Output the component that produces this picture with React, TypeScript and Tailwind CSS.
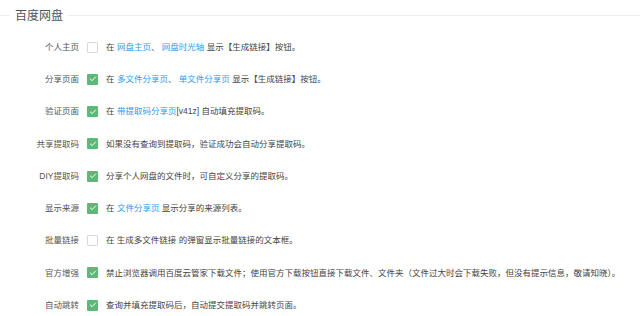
import { Check } from "lucide-react";

type Part = string | { link: string };

const rows: { label: string; checked: boolean; parts: Part[] }[] = [
    { label: "个人主页", checked: false, parts: ["在 ", { link: "网盘主页" }, "、 ", { link: "网盘时光轴" }, " 显示【生成链接】按钮。"] },
    { label: "分享页面", checked: true, parts: ["在 ", { link: "多文件分享页" }, "、 ", { link: "单文件分享页" }, " 显示【生成链接】按钮。"] },
    { label: "验证页面", checked: true, parts: ["在 ", { link: "带提取码分享页" }, "[v41z] 自动填充提取码。"] },
    { label: "共享提取码", checked: true, parts: ["如果没有查询到提取码，验证成功会自动分享提取码。"] },
    { label: "DIY提取码", checked: true, parts: ["分享个人网盘的文件时，可自定义分享的提取码。"] },
    { label: "显示来源", checked: true, parts: ["在 ", { link: "文件分享页" }, " 显示分享的来源列表。"] },
    { label: "批量链接", checked: false, parts: ["在 生成多文件链接 的弹窗显示批量链接的文本框。"] },
    {
        label: "官方增强",
        checked: true,
        parts: ["禁止浏览器调用百度云管家下载文件；使用官方下载按钮直接下载文件、文件夹（文件过大时会下载失败，但没有提示信息，敬请知晓）。"],
    },
    { label: "自动跳转", checked: true, parts: ["查询并填充提取码后，自动提交提取码并跳转页面。"] },
];

function Box({ checked }: { checked: boolean }) {
    return checked ? (
        <span className="flex h-[11px] w-[11px] shrink-0 items-center justify-center rounded-[1px] bg-[#5FB878]">
            <Check className="h-[8px] w-[8px] text-white" strokeWidth={3} />
        </span>
    ) : (
        <span className="h-[11px] w-[11px] shrink-0 rounded-[1px] border border-[#d9d9d9] bg-white" />
    );
}

export default function App() {
    return (
        <div className="h-[316px] w-[640px] overflow-hidden bg-white font-['Liberation_Sans','Noto_Sans_CJK_SC',sans-serif]">
            <div className="flex h-[31px] items-center">
                <div className="h-px w-[10px] bg-[#eeeeee]" />
                <span className="px-[5px] text-[12px] leading-none text-[#555]">百度网盘</span>
                <div className="h-px flex-1 bg-[#eeeeee]" />
            </div>
            {rows.map((r) => (
                <div key={r.label} className="flex h-[32.25px] items-center text-[8.5px] leading-none">
                    <span className="w-[79px] shrink-0 text-right text-[#555]">{r.label}</span>
                    <span className="ml-[8px] mr-[8px] flex">
                        <Box checked={r.checked} />
                    </span>
                    <span className="whitespace-nowrap text-[#444]">
                        {r.parts.map((p, i) =>
                            typeof p === "string" ? (
                                <span key={i}>{p}</span>
                            ) : (
                                <span key={i} className="text-[#2d9cf0]">
                                    {p.link}
                                </span>
                            )
                        )}
                    </span>
                </div>
            ))}
        </div>
    );
}
